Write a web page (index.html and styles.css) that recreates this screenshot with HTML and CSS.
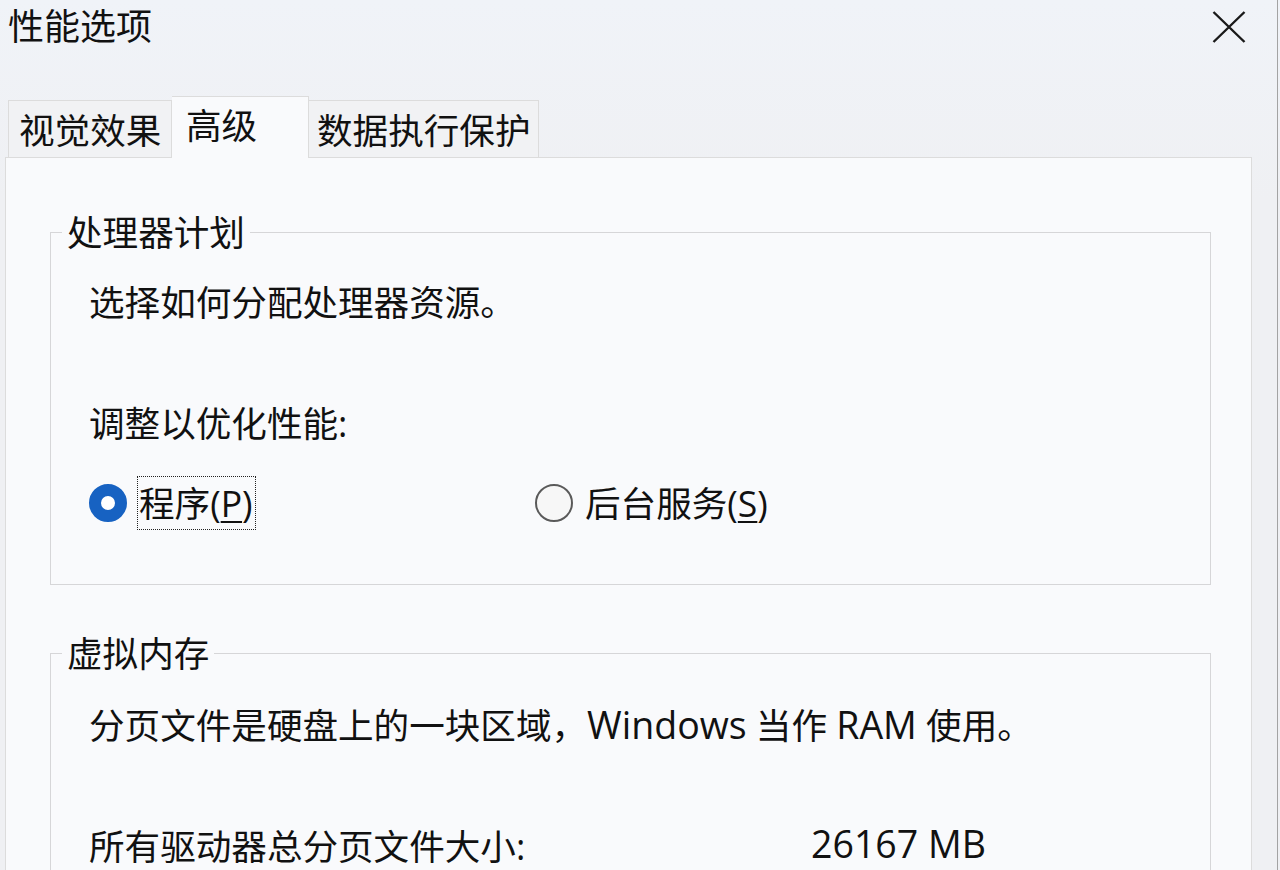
FILE: index.html
```html
<!DOCTYPE html>
<html lang="zh-CN">
<head>
<meta charset="utf-8">
<title>性能选项</title>
<link rel="stylesheet" href="styles.css">
</head>
<body>
<div class="window">
  <header class="titlebar">
    <h1 class="title">性能选项</h1>
    <button class="close" aria-label="关闭">
      <svg width="34" height="32" viewBox="0 0 34 32"><path d="M1.5 1 L32.5 31 M32.5 1 L1.5 31" stroke="#1a1a1a" stroke-width="2.4" fill="none"/></svg>
    </button>
  </header>
  <nav class="tabs">
    <div class="tab tab-visual">视觉效果</div>
    <div class="tab tab-adv active">高级</div>
    <div class="tab tab-dep">数据执行保护</div>
  </nav>
  <main class="panel">
    <fieldset class="group">
      <legend>处理器计划</legend>
      <div class="group-body">
        <p class="line first">选择如何分配处理器资源。</p>
        <p class="line gap-lg">调整以优化性能:</p>
        <div class="radios">
          <label class="option"><span class="radio checked"></span><span class="opt-label focus">程序(<u>P</u>)</span></label>
          <label class="option"><span class="radio"></span><span class="opt-label">后台服务(<u>S</u>)</span></label>
        </div>
      </div>
    </fieldset>
    <fieldset class="group group-vm">
      <legend>虚拟内存</legend>
      <div class="group-body">
        <p class="line first">分页文件是硬盘上的一块区域，<span class="latin">Windows</span> 当作 <span class="latin">RAM</span> 使用。</p>
        <div class="line gap-stat stat"><span class="stat-label">所有驱动器总分页文件大小:</span><span class="stat-value latin">26167 MB</span></div>
      </div>
    </fieldset>
  </main>
</div>
</body>
</html>
```
FILE: styles.css
```css
html, body {
  margin: 0;
  padding: 0;
  height: 870px;
  overflow: hidden;
}
body {
  background: linear-gradient(#f0f3f8, #eff0f3 200px, #eff0f3);
  font-family: "Open Sans", "Noto Sans CJK SC", sans-serif;
  font-size: 35.6px;
  line-height: 40px;
  color: #111;
}
.window {
  width: 1277px;
  height: 870px;
  border-right: 1px solid #a3a3a3;
  box-sizing: content-box;
}
.titlebar {
  height: 96px;
  display: flex;
  justify-content: space-between;
  align-items: flex-start;
  padding: 0 31px 0 8px;
}
.title {
  margin: 7px 0 0 0;
  font-size: 36px;
  font-weight: normal;
  line-height: 40px;
}
.close {
  margin-top: 11px;
  padding: 0;
  border: none;
  background: transparent;
  display: block;
}
.close svg { display: block; }
.tabs {
  display: flex;
  align-items: flex-end;
  margin-left: 8px;
  height: 61px;
}
.tab {
  box-sizing: border-box;
  height: 57px;
  border: 1px solid #dcdcdc;
  border-bottom: none;
  background: #f1f2f4;
  padding-top: 9px;
  white-space: nowrap;
}
.tab-visual { width: 164px; padding-left: 10px; }
.tab-adv { width: 137px; padding-left: 14px; }
.tab-dep { width: 230px; padding-left: 8px; border-left: none; }
.tab.active {
  height: 62px;
  margin-bottom: -1px;
  padding-top: 8px;
  background: #f9fafc;
  border-left: none;
  position: relative;
  z-index: 1;
}
.panel {
  display: block;
  margin: 0 25px 0 5px;
  height: 720px;
  border: 1px solid #dcdcdc;
  background: #f9fafc;
  padding: 54px 40px 0 44px;
}
.group {
  margin: 0;
  padding: 0 0 54px 0;
  border: 1px solid #d6d6d8;
  min-inline-size: 0;
}
.group legend {
  margin-left: 11px;
  padding: 0 5px;
  line-height: 40px;
}
.group-vm {
  margin-top: 48px;
}
.group-body {
  padding: 0 38px;
}
.line {
  margin: 0;
  white-space: nowrap;
}
.line.first { margin-top: 30px; }
.group-vm .line.first { margin-top: 32px; }
.line.gap-lg { margin-top: 81px; }
.line.gap-stat { margin-top: 81px; }
.latin {
  font-size: 37.5px;
  line-height: 36px;
}
.radios {
  display: flex;
  align-items: center;
  margin-top: 33px;
  height: 54px;
}
.option {
  display: flex;
  align-items: center;
}
.option:first-child { width: 446px; }
.radio {
  box-sizing: border-box;
  width: 38px;
  height: 38px;
  border-radius: 50%;
  border: 2px solid #5a5a5a;
  background: #f7f7f7;
  margin-right: 10px;
  flex: none;
}
.radio.checked {
  border: 12px solid #1762c2;
  background: #ffffff;
}
.opt-label {
  display: block;
  padding: 6px 2px 6px 1px;
  border: 1px dotted transparent;
}
.opt-label.focus {
  border-color: #222;
}
.opt-label u {
  text-decoration-thickness: 2px;
  text-underline-offset: 4px;
}
.stat {
  display: flex;
}
.stat-label {
  width: 722px;
  flex: none;
}
```
